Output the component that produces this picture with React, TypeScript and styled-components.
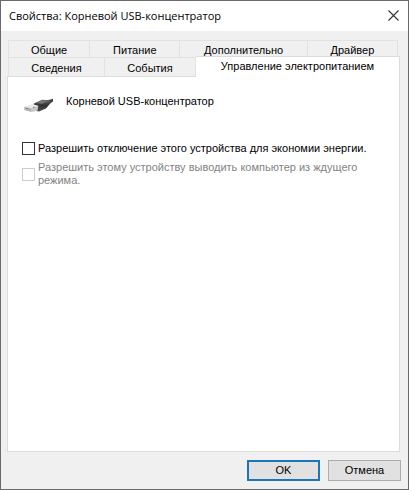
import React, { useState } from 'react';
import styled, { createGlobalStyle, css } from 'styled-components';

const colors = {
  frame: '#6a6a6c',
  face: '#f0f0f0',
  line: '#dcdcdc',
  tabLine: '#e2e2e2',
  accent: '#1a76b9',
  disabled: '#838383',
};

const GlobalStyle = createGlobalStyle`
  *, *::before, *::after { box-sizing: border-box; }
  html, body, #root { height: 100%; }
  body {
    margin: 0;
    background: #fff;
    color: #000;
    font: 11px/13px "Liberation Sans", Arial, sans-serif;
  }
  button, input { font: inherit; color: inherit; }
`;

const Dialog = styled.main`
  display: flex;
  flex-direction: column;
  height: 100%;
  margin-right: 1px;
  border: 1px solid ${colors.frame};
  background: ${colors.face};
`;

const TitleBar = styled.header`
  display: flex;
  align-items: center;
  justify-content: space-between;
  height: 30px;
  padding: 0 9px 0 8px;
  background: #fff;
`;

const Title = styled.h1`
  margin: 0;
  font: 11px/16px "Open Sans", "Segoe UI", sans-serif;
`;

const CloseButton = styled.button`
  display: flex;
  padding: 0 0 2px;
  border: 0;
  background: none;
`;

const Content = styled.div`
  display: flex;
  flex: 1;
  flex-direction: column;
  padding: 9px 8px 0 6px;
`;

const Tabs = styled.div`
  display: flex;
  flex-direction: column;
`;

const TabRow = styled.div<{ $columns: string; $front?: boolean }>`
  display: grid;
  grid-template-columns: ${p => p.$columns};
  height: ${p => (p.$front ? 19 : 17)}px;
  padding: ${p => (p.$front ? '0 0 0 1px' : '0 2px 0 1px')};
`;

const Tab = styled.button<{ $active?: boolean }>`
  padding: 2px 0 0;
  border: 1px solid ${colors.tabLine};
  border-width: 1px 1px 0 0;
  background: ${colors.face};
  text-align: center;
  white-space: nowrap;

  &:first-child { border-left-width: 1px; }

  ${p => p.$active && css`
    z-index: 1;
    margin: -1px 0 -1px;
    padding: 0 0 2px;
    border-color: ${colors.line};
    background: #fff;
  `}
`;

const Panel = styled.section`
  flex: 1;
  padding: 14px 14px;
  border: 1px solid ${colors.line};
  background: #fff;
`;

const Device = styled.div`
  display: flex;
  align-items: center;
  gap: 12px;
  height: 32px;
  margin-bottom: 19px;
`;

const DeviceName = styled.h2`
  margin: 0 0 12px;
  font: inherit;
`;

const Option = styled.label<{ $disabled?: boolean }>`
  display: flex;
  align-items: center;
  gap: 3px;
  min-height: 13px;
  margin-bottom: 6px;
  color: ${p => (p.$disabled ? colors.disabled : 'inherit')};
`;

const CheckBox = styled.input`
  flex: none;
  display: grid;
  place-items: center;
  width: 13px;
  height: 13px;
  margin: 0;
  border: 1px solid #333;
  background: #fff;
  appearance: none;

  &:checked::after {
    content: "✓";
    font-size: 11px;
  }

  &:disabled { border-color: #ccc; }
`;

const Footer = styled.footer`
  display: flex;
  justify-content: flex-end;
  gap: 8px;
  padding: 8px 7px 8px;
`;

const PushButton = styled.button<{ $primary?: boolean }>`
  width: 73px;
  height: 21px;
  padding: 0;
  border: ${p => (p.$primary ? `2px solid ${colors.accent}` : '1px solid #adadad')};
  background: #e1e1e1;
`;

const UsbIcon = () => (
  <svg width="32" height="32" viewBox="0 0 32 32" aria-hidden="true">
    <defs>
      <linearGradient id="plug" x1="0" y1="0" x2="0" y2="1">
        <stop offset="0" stopColor="#666" />
        <stop offset="0.5" stopColor="#303030" />
        <stop offset="1" stopColor="#555" />
      </linearGradient>
    </defs>
    <path d="M23 10 L31 7.8 L31 10.5 L26 14 Z" fill="#444" />
    <path d="M12 12.5 L20 8.8 L27 9.2 L29 11.5 L24 17.5 L17 20.5 L12 19.5 Z" fill="url(#plug)" />
    <path d="M14 12 L20 9.6 L26 10.1 L20 12.7 Z" fill="#777" />
    <path d="M2 16 L11 13.2 L16.5 14.8 L15.5 19.5 L10 21 L2.5 19 Z" fill="#c8c8c8" />
    <path d="M3 15.8 L11 13.6 L16 15 L9 17 Z" fill="#eee" />
    <path d="M2.5 16.5 L9 17.8 L9 20.7 L2.5 19 Z" fill="#b0b0b0" />
    <path d="M4.5 17.4 L6 17.7 M11 16.5 L12.5 16" stroke="#777" />
  </svg>
);

const backTabs = ['Общие', 'Питание', 'Дополнительно', 'Драйвер'];
const frontTabs = ['Сведения', 'События', 'Управление электропитанием'];

export default function App() {
  const [powerOff, setPowerOff] = useState(false);

  return (
    <>
      <GlobalStyle />
      <Dialog role="dialog" aria-labelledby="dialog-title">
        <TitleBar>
          <Title id="dialog-title">Свойства: Корневой USB-концентратор</Title>
          <CloseButton type="button" aria-label="Закрыть">
            <svg width="11" height="11" viewBox="0 0 11 11" aria-hidden="true">
              <path d="M0.5 0.5 L10.5 10.5 M10.5 0.5 L0.5 10.5" stroke="#333" strokeWidth="1.1" />
            </svg>
          </CloseButton>
        </TitleBar>
        <Content>
          <Tabs role="tablist">
            <TabRow $columns="82fr 90fr 127fr 90fr">
              {backTabs.map(name => (
                <Tab key={name} type="button" role="tab" aria-selected={false}>{name}</Tab>
              ))}
            </TabRow>
            <TabRow $front $columns="97fr 91fr 204fr">
              {frontTabs.map((name, i) => (
                <Tab key={name} type="button" role="tab" aria-selected={i === 2} $active={i === 2}>
                  {name}
                </Tab>
              ))}
            </TabRow>
          </Tabs>
          <Panel role="tabpanel" aria-label="Управление электропитанием">
            <Device>
              <UsbIcon />
              <DeviceName>Корневой USB-концентратор</DeviceName>
            </Device>
            <Option>
              <CheckBox
                type="checkbox"
                checked={powerOff}
                onChange={e => setPowerOff(e.target.checked)}
              />
              Разрешить отключение этого устройства для экономии энергии.
            </Option>
            <Option $disabled>
              <CheckBox type="checkbox" disabled />
              Разрешить этому устройству выводить компьютер из ждущего режима.
            </Option>
          </Panel>
        </Content>
        <Footer>
          <PushButton type="button" $primary>OK</PushButton>
          <PushButton type="button">Отмена</PushButton>
        </Footer>
      </Dialog>
    </>
  );
}
